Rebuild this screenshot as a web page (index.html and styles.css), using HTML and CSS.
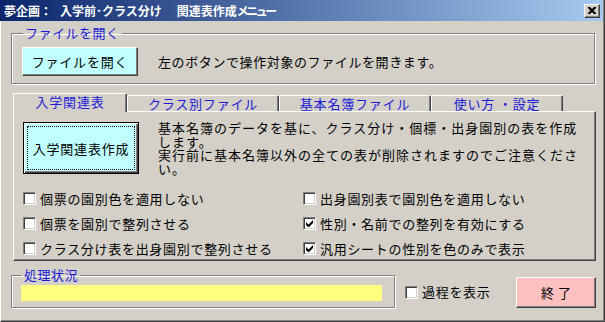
FILE: index.html
```html
<!DOCTYPE html>
<html lang="ja">
<head>
<meta charset="utf-8">
<title>関連表作成メニュー</title>
<link rel="stylesheet" href="styles.css">
</head>
<body>
<div class="window">
  <div class="titlebar">
    <span class="title"><span>夢企画：</span><span class="title-mid">入学前･クラス分け</span><span class="title-end">関連表作成<span class="title-kana">メニュー</span></span></span>
    <button class="close" aria-label="閉じる">
      <svg width="8" height="7" viewBox="0 0 8 7"><path d="M0 0h2l2 2 2-2h2v1L5.5 3.5 8 6v1H6L4 5 2 7H0V6l2.5-2.5L0 1z" fill="#000"/></svg>
    </button>
  </div>
  <div class="content">
    <fieldset class="group group-file">
      <legend>ファイルを開く</legend>
      <div class="file-row">
        <button class="btn btn-cyan btn-open">ファイルを開く</button>
        <span class="hint">左のボタンで操作対象のファイルを開きます。</span>
      </div>
    </fieldset>

    <div class="tabs">
      <div class="tab tab-active tab-1">入学関連表</div>
      <div class="tab tab-2">クラス別ファイル</div>
      <div class="tab tab-3">基本名簿ファイル</div>
      <div class="tab tab-4">使い方 ・設定</div>
    </div>
    <div class="panel">
      <div class="panel-top">
        <button class="btn btn-cyan btn-make"><span class="focus">入学関連表作成</span></button>
        <div class="desc">
          <p>基本名簿のデータを基に、クラス分け・個標・出身園別の表を作成します。</p>
          <p>実行前に基本名簿以外の全ての表が削除されますのでご注意ください。</p>
        </div>
      </div>
      <div class="options">
        <label class="check"><span class="box"></span>個票の園別色を適用しない</label>
        <label class="check"><span class="box"></span>出身園別表で園別色を適用しない</label>
        <label class="check"><span class="box"></span>個票を園別で整列させる</label>
        <label class="check"><span class="box checked"><svg width="7" height="7" viewBox="0 0 7 7"><path d="M0 2v3l2 2h1l4-4V0L2.5 4.5z" fill="#000"/></svg></span>性別・名前での整列を有効にする</label>
        <label class="check"><span class="box"></span>クラス分け表を出身園別で整列させる</label>
        <label class="check"><span class="box checked"><svg width="7" height="7" viewBox="0 0 7 7"><path d="M0 2v3l2 2h1l4-4V0L2.5 4.5z" fill="#000"/></svg></span>汎用シートの性別を色のみで表示</label>
      </div>
    </div>

    <div class="bottom">
      <fieldset class="group group-status">
        <legend>処理状況</legend>
        <div class="progress"></div>
      </fieldset>
      <label class="check check-progress"><span class="box"></span>過程を表示</label>
      <button class="btn btn-pink btn-end">終了</button>
    </div>
  </div>
</div>
</body>
</html>
```

FILE: styles.css
```css
* { box-sizing: border-box; }

body {
  margin: 0;
  background: #d4d0c8;
  font-family: "Noto Sans CJK JP", "Noto Sans", sans-serif;
  font-size: 13px;
  color: #000;
}

.window {
  width: 605px;
  height: 322px;
  border-left: 1px solid #ffffff;
  border-right: 1px solid #404040;
  border-bottom: 1px solid #404040;
  box-shadow: inset -1px -1px 0 #808080;
}

.titlebar {
  height: 21px;
  margin-left: -1px;
  width: 603px;
  display: flex;
  align-items: center;
  padding: 0 3px 0 4px;
  background: linear-gradient(to right, #0a246a, #a6caf0);
}

.title {
  color: #fff;
  font-weight: bold;
  font-size: 12px;
  line-height: 14px;
  white-space: nowrap;
  display: flex;
}

.title-mid { margin-left: 8px; }
.title-end { margin-left: 15px; }
.title-kana { letter-spacing: -2.5px; }

.close {
  margin-left: auto;
  width: 16px;
  height: 14px;
  padding: 0;
  display: flex;
  align-items: center;
  justify-content: center;
  background: #d4d0c8;
  border: 1px solid;
  border-color: #fff #404040 #404040 #fff;
  box-shadow: inset -1px -1px 0 #808080;
}

.content {
  padding-left: 10px;
}

/* group boxes */
.group {
  margin: 0;
  border: 1px solid #808080;
  box-shadow: inset 1px 1px 0 #fff, 1px 1px 0 #fff;
  min-width: 0;
}

.group legend {
  color: #1a1ad8;
  font-size: 13px;
  line-height: 14px;
  padding: 0 2px;
  margin-left: 1px;
  letter-spacing: 0.5px;
}

.group-file {
  margin-top: 5px;
  width: 584px;
  padding: 7px 10px 7px;
}

.file-row {
  display: flex;
  align-items: center;
}

.hint {
  margin-left: 20px;
  letter-spacing: 0.6px;
}

/* buttons */
.btn {
  font-family: inherit;
  font-size: 13px;
  letter-spacing: 0.8px;
  color: #000;
  padding: 0;
  border: 1px solid;
  border-color: #fff #404040 #404040 #fff;
  box-shadow: inset -1px -1px 0 #808080;
}

.btn-cyan { background: #c0ffff; }
.btn-pink { background: #ffc0c0; }

.btn-open {
  width: 116px;
  height: 29px;
}

.btn-make {
  width: 116px;
  height: 52px;
  border: 1px solid #000;
  box-shadow: inset 1px 1px 0 #fff, inset -1px -1px 0 #404040, inset -2px -2px 0 #808080;
  padding: 3px;
  display: flex;
}

.focus {
  flex: 1;
  display: flex;
  align-items: center;
  justify-content: center;
  border: 1px dotted #000;
}

/* tabs */
.tabs {
  margin-top: 9px;
  margin-left: 2px;
  height: 18px;
  display: flex;
  align-items: flex-end;
  position: relative;
  z-index: 1;
}

.tab {
  height: 16px;
  display: flex;
  align-items: center;
  justify-content: center;
  color: #1a1ad8;
  letter-spacing: 0.8px;
  line-height: 14px;
  border-top: 1px solid #fff;
  border-left: 1px solid #fff;
  border-right: 1px solid #404040;
  border-radius: 2px 2px 0 0;
  box-shadow: inset -1px 0 0 #808080;
}

.tab-active {
  height: 19px;
  margin-bottom: -1px;
  background: #d4d0c8;
  padding-bottom: 2px;
}

.tab-1 { width: 114px; }
.tab-2 { width: 152px; }
.tab-3 { width: 152px; }
.tab-4 { width: 132px; }

.panel {
  margin-left: 2px;
  width: 583px;
  height: 150px;
  border: 1px solid;
  border-color: #fff #404040 #404040 #fff;
  box-shadow: inset -1px -1px 0 #808080;
  padding: 10px 9px 0;
}

.panel-top {
  display: flex;
  align-items: flex-start;
}

.desc {
  margin-left: 19px;
  margin-top: -1px;
  width: 428px;
  letter-spacing: 1px;
  line-height: 13.5px;
}

.desc p { margin: 0; }

.options {
  margin-top: 11px;
  display: grid;
  grid-template-columns: 280px 1fr;
  grid-auto-rows: 25px;
}

.check {
  display: flex;
  align-items: center;
  gap: 4px;
  letter-spacing: 0.7px;
  line-height: 14px;
  white-space: nowrap;
}

.box {
  width: 13px;
  height: 13px;
  flex: none;
  background: #fff;
  border: 1px solid;
  border-color: #808080 #fff #fff #808080;
  box-shadow: inset 1px 1px 0 #404040, inset -1px -1px 0 #d4d0c8;
  display: flex;
  align-items: center;
  justify-content: center;
}

/* bottom row */
.bottom {
  margin-top: 7px;
  width: 585px;
  display: flex;
  align-items: flex-start;
}

.group-status {
  width: 384px;
  padding: 3px 12px 6px 9px;
}

.progress {
  height: 16px;
  background: #ffff80;
}

.check-progress {
  margin-left: 10px;
  margin-top: 17px;
}

.btn-end {
  margin-left: auto;
  margin-top: 9px;
  width: 80px;
  height: 31px;
  font-size: 13px;
  letter-spacing: 4px;
  padding-left: 4px;
}
```
